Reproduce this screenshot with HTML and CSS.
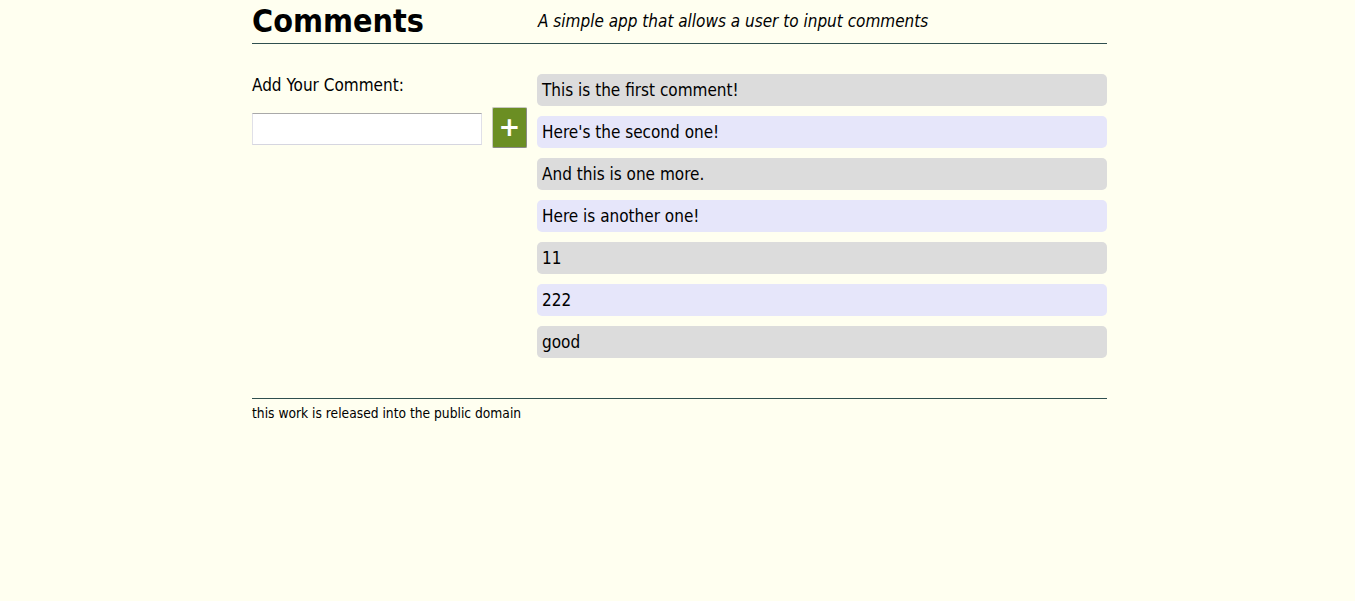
FILE: index.html
```html
<!DOCTYPE html>
<html>
<head>
<meta charset="utf-8">
<link rel="stylesheet" href="styles.css">
</head>
<body>
<div class="page">
  <header class="header">
    <h1 class="title">Comments</h1>
    <p class="subtitle">A simple app that allows a user to input comments</p>
  </header>
  <main class="main">
    <section class="add">
      <p class="add-label">Add Your Comment:</p>
      <div class="add-row">
        <input class="add-input" type="text">
        <button class="add-btn">+</button>
      </div>
    </section>
    <section class="comments">
      <p class="comment odd">This is the first comment!</p>
      <p class="comment even">Here's the second one!</p>
      <p class="comment odd">And this is one more.</p>
      <p class="comment even">Here is another one!</p>
      <p class="comment odd">11</p>
      <p class="comment even">222</p>
      <p class="comment odd">good</p>
    </section>
  </main>
  <footer class="footer">this work is released into the public domain</footer>
</div>
</body>
</html>
```
FILE: styles.css
```css
html, body {
  margin: 0;
  padding: 0;
  background: #fffff0;
}
body {
  font-family: "DejaVu Sans Condensed", "DejaVu Sans", sans-serif;
  color: #000;
}
.page {
  width: 855px;
  margin: 0 0 0 252px;
}
.header {
  display: grid;
  grid-template-columns: 285px 570px;
  align-items: end;
  border-bottom: 1px solid #2f4f4f;
  height: 43px;
}
.title {
  margin: 0;
  font-size: 32px;
  font-weight: bold;
  line-height: 43px;
  height: 43px;
  position: relative;
  top: 0;
}
.subtitle {
  margin: 0;
  font-style: italic;
  font-size: 17px;
  line-height: 43px;
  height: 43px;
  padding-left: 1px;
}
.main {
  display: grid;
  grid-template-columns: 285px 570px;
  align-items: start;
  padding-top: 30px;
  padding-bottom: 40px;
  border-bottom: 1px solid #2f4f4f;
}
.add-label {
  margin: 0;
  font-size: 17px;
  line-height: 22px;
}
.add-row {
  display: flex;
  align-items: center;
  gap: 10px;
  margin-top: 11px;
}
.add-input {
  width: 230px;
  height: 32px;
  box-sizing: border-box;
  border: 1px solid #a9a9a9;
  border-color: #a9a9a9 #e0e0e8 #d6d6e0 #e0e0e8;
  background: #fff;
  margin: 0;
  margin-top: 2px;
}
.add-btn {
  width: 35px;
  height: 41px;
  box-sizing: border-box;
  background: #6b8e23;
  color: #fff;
  font-family: "DejaVu Sans", sans-serif;
  font-size: 26px;
  font-weight: bold;
  line-height: 1;
  border: 1px solid #c8c8c0;
  border-right-color: #8a8a86;
  border-bottom-color: #8a8a86;
  border-radius: 2px;
  padding: 0 0 2px;
  margin: 0;
}
.comments {
  display: flex;
  flex-direction: column;
  gap: 10px;
}
.comment {
  margin: 0;
  height: 32px;
  line-height: 32px;
  padding-left: 5px;
  border-radius: 5px;
  font-size: 17px;
}
.odd { background: #dcdcdc; }
.even { background: #e6e6fa; }
.footer {
  font-size: 13.7px;
  line-height: 18px;
  padding-top: 5px;
}
```
